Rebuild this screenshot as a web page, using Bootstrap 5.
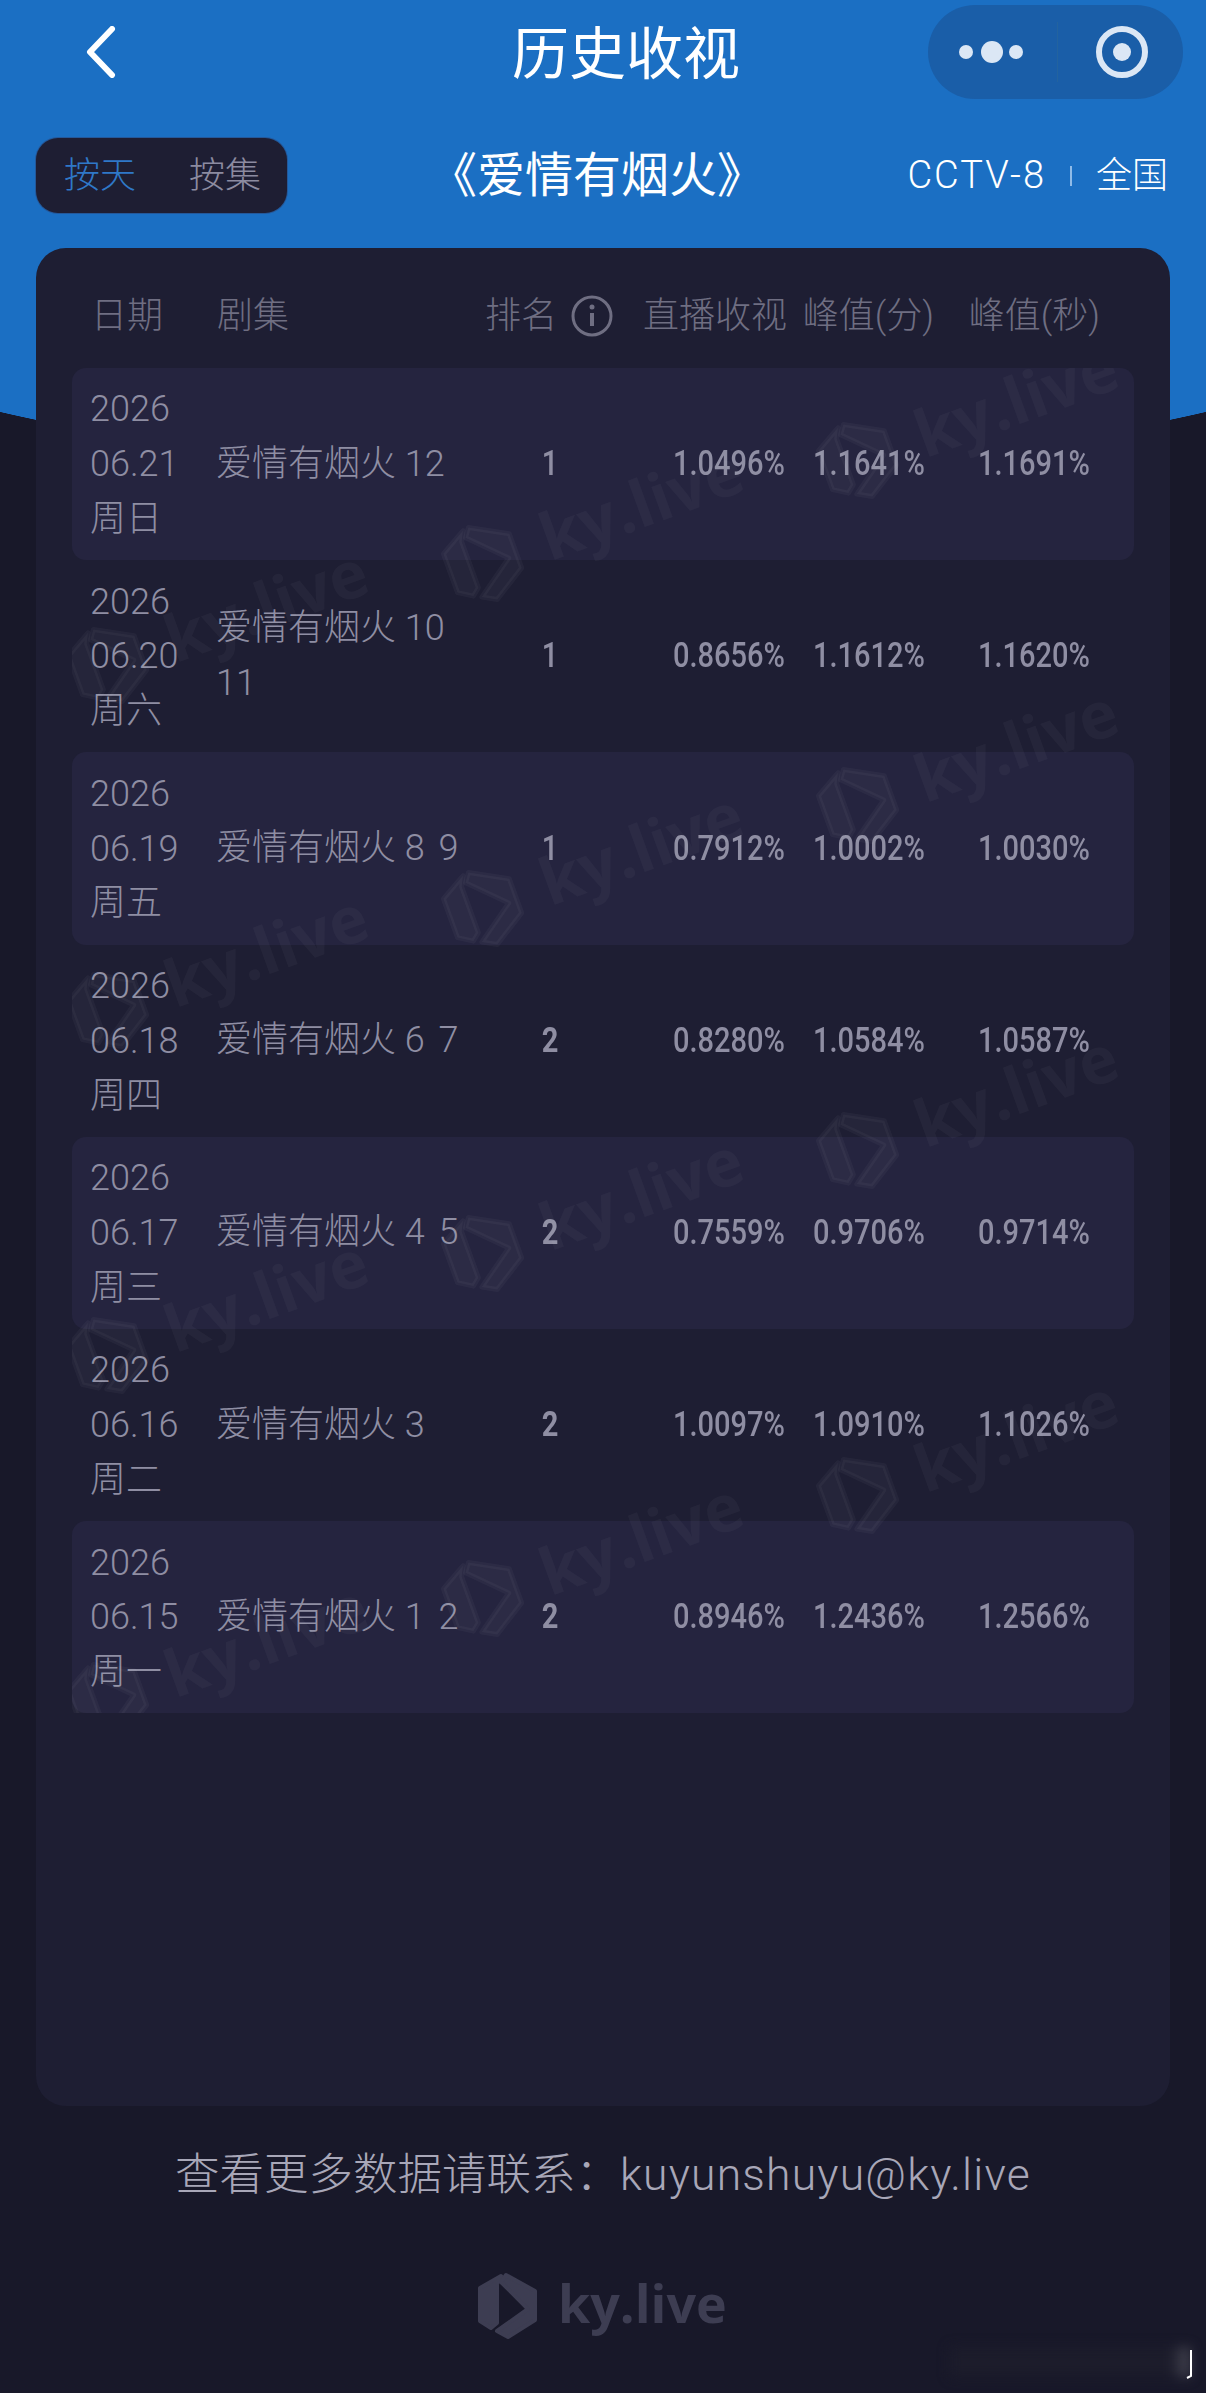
<!DOCTYPE html>
<html lang="zh-CN">
<head>
  <meta charset="UTF-8" />
  <title>历史收视</title>
  <meta name="viewport" content="width=device-width, initial-scale=1" />
  <link href="https://cdn.jsdelivr.net/npm/bootstrap@5.3.0/dist/css/bootstrap.min.css" rel="stylesheet" />
  <style>
    html, body {
      height: 2393px;
    }

    body {
      background: #181829;
      color: #8f8ea3;
      font-family: Roboto, "Noto Sans CJK SC", sans-serif;
      font-weight: 300;
      font-size: 36px;
      overflow: hidden;
    }

    .hero-bg {
      top: 0;
      left: 0;
      width: 100%;
      height: 472px;
      background:
        radial-gradient(900px 232px at 603px 240px, #1b6fc3 99.8%, transparent 100%),
        linear-gradient(#1b6fc3, #1b6fc3) top / 100% 240px no-repeat;
    }

    .top-bar {
      height: 104px;
      padding: 0 23px 0 85px;
    }

    .page-title {
      margin: 5px 0 0 395px;
      font-size: 57px;
      font-weight: 400;
      line-height: 1;
      color: #fff;
    }

    .capsule {
      width: 255px;
      height: 94px;
      border-radius: 47px;
      background: #1a5ea8;
    }

    .capsule-line {
      width: 1px;
      height: 60px;
      background: #23639f;
    }

    .sub-bar {
      height: 75px;
      margin-top: 34px;
      padding: 0 38px 0 36px;
      color: #fff;
    }

    .day-switch {
      width: 251px;
      height: 75px;
      padding: 0 26px 0 28px;
      border-radius: 22px;
      background: #1e1e33;
      box-shadow: 0 0 0 1px #24589a;
      color: #8c8ba0;
    }

    .day-active {
      color: #2f78c8;
    }

    .drama-title {
      margin-left: 142px;
      font-size: 48px;
      font-weight: 400;
    }

    .channel-name {
      font-size: 38px;
      letter-spacing: 2px;
    }

    .channel-sep {
      width: 2px;
      height: 20px;
      margin: 0 24px;
      background: #8fbbe8;
    }

    .rate-panel {
      width: 1134px;
      height: 1858px;
      margin: 35px 0 0 36px;
      border: 0;
      border-radius: 30px;
      background: #1e1e33;
      color: inherit;
    }

    .rate-head {
      height: 120px;
      padding: 15px 0 0 55px;
      color: #6f6e82;
      grid-template-columns: 126px 268px 151px 151px 147px 166px;
      align-items: center;
    }

    .rank-head {
      gap: 14px;
    }

    .rate-rows {
      width: 1062px;
      height: 1345px;
      margin-left: 36px;
    }

    .rate-row {
      height: 192.2px;
      padding-left: 18px;
      border-radius: 14px;
      grid-template-columns: 126px 255px 158px 155.5px 140px 165.5px;
      align-items: center;
      line-height: 54.8px;
    }

    .rate-row:nth-child(odd) {
      background: #25243f;
    }

    .rate-date {
      margin-top: 1px;
    }

    .rate-num span {
      display: inline-block;
      font-size: 35px;
      font-weight: 500;
      transform: scaleX(0.83);
      transform-origin: right center;
    }

    .rate-rank span {
      transform-origin: center;
    }

    .rank-two span {
      font-weight: 700;
    }

    .ep-gap {
      word-spacing: 5px;
    }

    .water-layer {
      top: 0;
      left: 0;
      pointer-events: none;
    }

    .mark-text {
      font-family: "Open Sans", sans-serif;
      font-weight: 700;
      font-size: 52px;
    }

    .contact-line {
      margin: 39px 0 0;
      font-size: 44.5px;
      line-height: 60px;
      text-align: center;
      color: #a8a7b8;
    }

    .contact-mail {
      letter-spacing: 1.2px;
    }

    .foot-logo {
      margin: 66px 0 0 478px;
      display: block;
    }

    .scribble {
      right: 16px;
      bottom: 16px;
      width: 240px;
      height: 30px;
      background: linear-gradient(90deg, #1c1c2b 92%, #4a4a55);
      filter: blur(6px);
    }

    .edge-mark {
      right: 12px;
      bottom: 14px;
    }
  </style>
</head>
<body class="position-relative overflow-hidden">

  <div class="hero-bg position-absolute"></div>

  <svg width="0" height="0" class="position-absolute">
    <defs>
      <g id="kyLogo">
        <path d="M-7 -30 L-28 -18 L-28 15 L-17 22 L-11 17 L-11 -22 Z" stroke-width="4" stroke-linejoin="round" />
        <path d="M-2 -31 L27 -15 L27 14 L0 31 L-11 25 L20 3 L-7 -24 Z" stroke-width="4" stroke-linejoin="round" />
        <text class="mark-text" x="50" y="17" stroke="none">ky.live</text>
      </g>
    </defs>
  </svg>

  <!-- top bar -->
  <div class="top-bar d-flex align-items-center position-relative">
    <svg width="32" height="52" viewBox="0 0 32 52" fill="none" stroke="#fff" stroke-width="6" stroke-linecap="round" stroke-linejoin="round">
      <path d="M27 3 L5 26 L27 49" />
    </svg>
    <h1 class="page-title">历史收视</h1>
    <div class="capsule d-flex align-items-center ms-auto">
      <svg width="129" height="94" viewBox="0 0 129 94" fill="#dbe7f5">
        <circle cx="38" cy="47" r="7" />
        <circle cx="64" cy="47" r="11" />
        <circle cx="88" cy="47" r="7" />
      </svg>
      <div class="capsule-line"></div>
      <svg width="125" height="94" viewBox="0 0 125 94" fill="none" stroke="#dbe7f5">
        <circle cx="64" cy="47" r="23" stroke-width="6" />
        <circle cx="64" cy="47" r="9" fill="#dbe7f5" stroke="none" />
      </svg>
    </div>
  </div>

  <!-- switch, drama name, channel -->
  <div class="sub-bar d-flex align-items-center position-relative">
    <div class="day-switch d-flex align-items-center justify-content-between">
      <span class="day-active">按天</span>
      <span>按集</span>
    </div>
    <div class="drama-title">《爱情有烟火》</div>
    <div class="d-flex align-items-center ms-auto">
      <span class="channel-name">CCTV-8</span>
      <span class="channel-sep"></span>
      <span>全国</span>
    </div>
  </div>

  <div class="card rate-panel position-relative">
    <div class="rate-head d-grid">
      <span>日期</span>
      <span>剧集</span>
      <span class="rank-head d-flex align-items-center">排名
        <svg width="42" height="42" viewBox="0 0 42 42" fill="none" stroke="#6f6e82" stroke-width="3">
          <circle cx="21" cy="21" r="19" />
          <path d="M21 18 V31" stroke-width="4" />
          <circle cx="21" cy="12" r="2.5" fill="#6f6e82" stroke="none" />
        </svg>
      </span>
      <span class="text-end">直播收视</span>
      <span class="text-end">峰值(分)</span>
      <span class="text-end">峰值(秒)</span>
    </div>

    <div class="rate-rows position-relative overflow-hidden">
      <div id="rateRows"></div>
      <svg id="waterLayer" class="water-layer position-absolute" width="1062" height="1345" fill="#fff" stroke="#fff" fill-opacity="0.035" stroke-opacity="0.035"></svg>
    </div>
  </div>

  <p class="contact-line position-relative">查看更多数据请联系：<span class="contact-mail">kuyunshuyu@ky.live</span></p>

  <svg class="foot-logo position-relative" width="260" height="70" viewBox="-30 -35 260 70" fill="#3d3d52" stroke="#3d3d52">
    <use href="#kyLogo" />
  </svg>

  <div class="scribble position-absolute"></div>
  <svg class="edge-mark position-absolute" width="8" height="30" viewBox="0 0 8 30" fill="none" stroke="#fff" stroke-width="2">
    <path d="M5 1 V27 L1 29" />
  </svg>

  <script src="https://cdn.jsdelivr.net/npm/bootstrap@5.3.0/dist/js/bootstrap.bundle.min.js"></script>

  <script>
    const days = [
      { date: "06.21", week: "周日", ep: "12", rank: 1, live: "1.0496%", peakMin: "1.1641%", peakSec: "1.1691%" },
      { date: "06.20", week: "周六", ep: "10 11", rank: 1, live: "0.8656%", peakMin: "1.1612%", peakSec: "1.1620%" },
      { date: "06.19", week: "周五", ep: "8 9", rank: 1, live: "0.7912%", peakMin: "1.0002%", peakSec: "1.0030%" },
      { date: "06.18", week: "周四", ep: "6 7", rank: 2, live: "0.8280%", peakMin: "1.0584%", peakSec: "1.0587%" },
      { date: "06.17", week: "周三", ep: "4 5", rank: 2, live: "0.7559%", peakMin: "0.9706%", peakSec: "0.9714%" },
      { date: "06.16", week: "周二", ep: "3", rank: 2, live: "1.0097%", peakMin: "1.0910%", peakSec: "1.1026%" },
      { date: "06.15", week: "周一", ep: "1 2", rank: 2, live: "0.8946%", peakMin: "1.2436%", peakSec: "1.2566%" }
    ];

    document.getElementById("rateRows").innerHTML = days.map(d => `
      <div class="rate-row d-grid">
        <div class="rate-date">2026<br />${d.date}<br />${d.week}</div>
        <div>爱情有烟火 <span class="${d.ep.length === 3 ? "ep-gap" : ""}">${d.ep}</span></div>
        <div class="rate-num rate-rank text-center ${d.rank === 2 ? "rank-two" : ""}"><span>${d.rank}</span></div>
        <div class="rate-num text-end"><span>${d.live}</span></div>
        <div class="rate-num text-end"><span>${d.peakMin}</span></div>
        <div class="rate-num text-end"><span>${d.peakSec}</span></div>
      </div>`).join("");

    // watermark spots, logo centre relative to the rows box
    const marks = [
      [412, 195], [412, 540], [412, 885], [412, 1230],
      [787, 92], [787, 437], [787, 782], [787, 1127],
      [37, 297], [37, 642], [37, 987], [37, 1332]
    ];
    document.getElementById("waterLayer").innerHTML = marks.map(([x, y]) =>
      `<use href="#kyLogo" transform="translate(${x} ${y}) rotate(-20) scale(1.25)" />`).join("");
  </script>
</body>
</html>
